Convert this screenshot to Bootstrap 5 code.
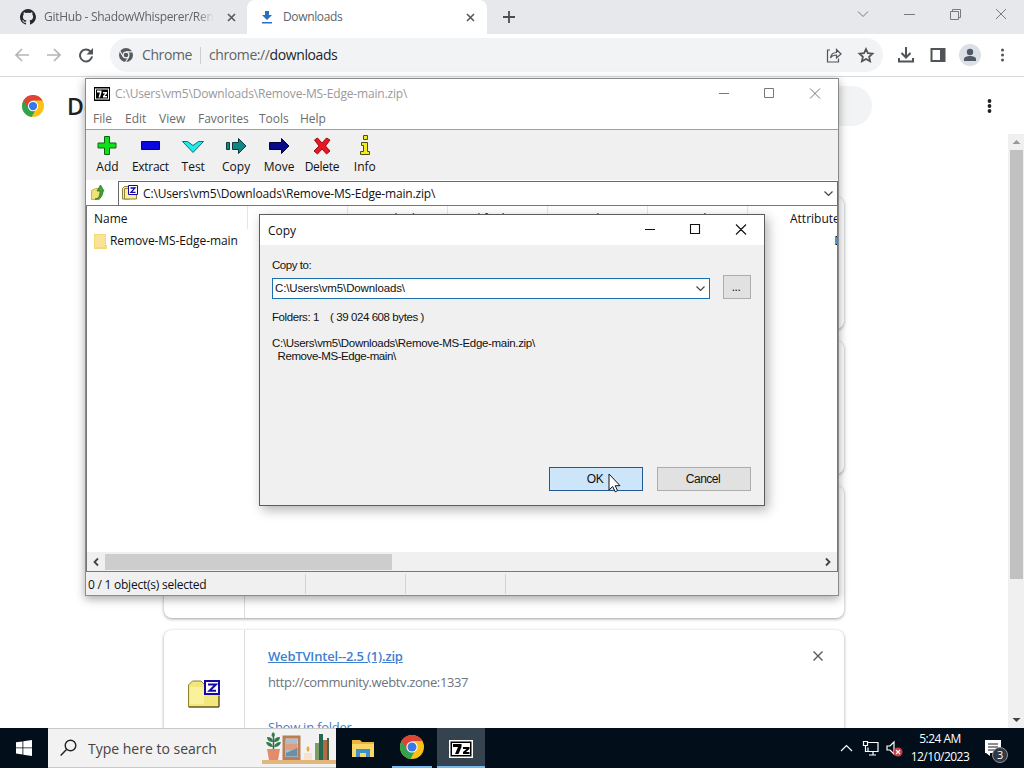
<!DOCTYPE html>
<html lang="en">
<head>
<meta charset="utf-8">
<title>Downloads</title>
<link href="https://cdn.jsdelivr.net/npm/bootstrap@5.3.0/dist/css/bootstrap.min.css" rel="stylesheet">
<style>
body{width:1024px;height:768px;overflow:hidden;font-family:"Open Sans","Noto Sans",sans-serif;font-size:12px;line-height:16px;color:#111;background:#fff}
svg{display:block;flex:none}
.txt{white-space:pre;flex:none}
.browser{height:728px}
.tabstrip{height:34px;flex:none;background:#e7e8eb;color:#5f6368}
.tab-idle{width:247px;padding-left:20px;border-bottom-right-radius:8px}
.tab-live{width:240px;background:#fff;border-radius:8px 8px 0 0;padding-left:14px}
.tab-title{font-size:12px;letter-spacing:-.35px}
.fade-end{width:170px;letter-spacing:-.3px;overflow:hidden;-webkit-mask-image:linear-gradient(90deg,#000 90%,transparent 100%);mask-image:linear-gradient(90deg,#000 90%,transparent 100%)}
.toolbar-row{height:43px;flex:none;border-bottom:1px solid #d9dadc;padding-left:14px}
.omnibox{width:773px;height:34px;border-radius:17px;background:#f1f3f4;font-size:14px;color:#5f6368;padding-left:9px;letter-spacing:-.4px}
.omnibox .vr{height:17px;align-self:center}
.pagehead{height:57px;flex:none}
.page-title{font-size:23px;line-height:28px;font-weight:600;color:#202124;width:98px}
.searchpill{width:680px;height:40px;border-radius:20px;background:#f1f3f4}
.pagebody{min-height:0}
.scroller{width:16px;background:#f0f0f0}
.thumb{width:13px;height:429px;background:#c1c1c1}
.dl-list{width:680px;margin-left:164px;margin-top:63px;gap:12px}
.dl-card{height:132.3px;border-radius:8px;background:#fff;box-shadow:0 1px 3px rgba(60,64,67,.4),0 1px 4px rgba(60,64,67,.12)}
.dl-icon{width:81px;border-right:1px solid #dcdcdc}
.dl-body{padding:18px 0 0 23px;font-size:13px}
.dl-link{font-weight:600;color:#3f7fd0;letter-spacing:-.19px}
.zipwin{left:85px;top:78px;width:754px;height:518px;border:1px solid #8b8b8b;background:#fff;box-shadow:0 3px 9px rgba(0,0,0,.35)}
.zip-title{height:30px;flex:none;color:#999;padding-left:8px}
.zip-menu{height:20px;flex:none;color:#6b6b6b;padding-left:7px}
.zip-tools{height:51px;flex:none;background:#f0f0f0;border-top:1px solid #a0a0a0}
.tool{width:42.9px;padding-top:5px}
.tool svg{margin-bottom:2px}
.path{letter-spacing:-.16px}
.addr{height:25px;flex:none}
.addr-box{border:1px solid #6a6a6a;border-bottom:0;margin-top:1px}
.filelist{border:1px solid #777;flex:1 1 0;min-height:0;overflow:hidden}
.col-row{height:23px;flex:none;display:grid;grid-template-columns:161px 100px 100px 100px 100px 100px 100px;align-items:center;overflow:hidden}
.col-row>div{border-right:1px solid #e5e5e5;height:23px;line-height:25px;padding:0 7px;white-space:nowrap}
.hscroll{height:19px;background:#f0f0f0}
.hthumb{width:287px;height:16px;background:#cdcdcd}
.statusbar{background:#f0f0f0;height:23px}
.statusbar>div{border-right:1px solid #d4d4d4;height:20px;line-height:22px}
.copydlg{left:259px;top:214px;width:506px;height:292px;border:1px solid #5c5c5c;background:#f0f0f0;box-shadow:3px 4px 11px rgba(0,0,0,.3);font-family:"Liberation Sans",Arial,sans-serif;font-size:11.5px;line-height:13px}
.dlg-title{height:30px;background:#fff;padding-left:8px;font-family:"Open Sans","Noto Sans",sans-serif;font-size:12px}
.combo{width:438px;height:21px;border:1px solid #1a6fb0;background:#fff;letter-spacing:-.13px}
.btn-win{border:1px solid #adadad;background:#e1e1e1;border-radius:0;font-size:12px;line-height:13px;padding:0 2px 0 0;color:#111;height:24px;width:94px;letter-spacing:-.5px}
.btn-win.go{border:1px solid #225a96;background:#cce5f9}
.pointer{left:608px;top:473px}
.taskbar{height:40px;background:#020e19;color:#fff}
.tb-search{width:288px;background:#f2f2f2;border:1px solid #c9c9c9;border-width:1px 0;color:#444;font-size:14px}
.tb-app{width:48px;height:40px}
.run{border-bottom:2px solid #76b9ed}
.active-app{background:#35434f}
.clock{width:66px;padding-top:2px;line-height:18px;letter-spacing:-.5px}
</style>
</head>
<body>
<svg width="0" height="0" class="position-absolute"><defs>
<symbol id="chrome" viewBox="0 0 24 24"><circle cx="12" cy="12" r="12" fill="#fbc116"/><path d="M12 12 1.6 6A12 12 0 0 0 10.5 23.9L16 14z" fill="#31a350"/><path d="M1.6 6A12 12 0 0 1 22.4 6H12L7 14.500z" fill="#dc4437"/><circle cx="12" cy="12" r="5.6" fill="#fff"/><circle cx="12" cy="12" r="4.5" fill="#3b78e7"/></symbol>
<symbol id="seven" viewBox="0 0 24 18"><path d="M0 0h24v18H0z" fill="#fff"/><path d="M1.500 1.500h21v15h-21z" fill="#000"/><path d="M3 3h18v12H3z" fill="#fff"/><path d="M4 4h8.500v3L9.500 14H6l3-7H4zM14 7h6.500v2L17 12h3.500v2H14v-2l3.500-3H14z" fill="#000"/></symbol>
<symbol id="sevensm" viewBox="0 0 16 14"><path d="M0 0h16v14H0z" fill="#000"/><path d="M1 1.500h14v11H1z" fill="#fff"/><path d="M2 2.500h12v9H2z" fill="#000"/><path d="M3 3.500h4.500v2L6 10.500H4.500L6 5.500H3zM9 5h4v1.500l-2.300 2.500H13v1.500H9V9l2.300-2.500H9z" fill="#fff"/></symbol>
<symbol id="zfold" viewBox="0 0 32 28"><path d="M.5 5l4-4H13l4 4h14v22H.500z" fill="#f3e67c" stroke="#8d8330"/><path d="M2 7h14v17H2z" fill="#fbf6a8" opacity=".7"/><path d="M1 27h30V16" fill="none" stroke="#4d4718"/><path d="M17 1h14v13H17z" fill="#fff" stroke="#1508a8" stroke-width="2"/><path d="M20 4.500h8l-6.500 6.300H28" fill="none" stroke="#1508a8" stroke-width="2"/></symbol>
</defs></svg>

<div class="browser d-flex flex-column">
  <div class="tabstrip d-flex align-items-stretch">
    <div class="tab-idle d-flex align-items-center">
      <svg width="16" height="16" viewBox="0 0 16 16"><path fill="#24292f" d="M8 0a8 8 0 0 0-2.530 15.590c.4.070.550-.170.550-.380v-1.490C4 14.090 3.480 13.200 3.320 12.750c-.090-.230-.480-.940-.820-1.130-.280-.150-.680-.520-.010-.530.630-.010 1.080.580 1.230.820.720 1.210 1.870.870 2.330.660.070-.520.280-.870.510-1.070-1.780-.200-3.640-.890-3.640-3.950 0-.870.310-1.590.820-2.150-.080-.200-.360-1.020.080-2.120 0 0 .670-.210 2.200.820a7.400 7.400 0 0 1 4 0c1.530-1.040 2.200-.820 2.200-.820.440 1.100.160 1.920.080 2.120.510.560.820 1.270.820 2.150 0 3.070-1.870 3.750-3.650 3.950.290.250.540.730.540 1.480v2.200c0 .210.150.460.550.380A8 8 0 0 0 8 0"/></svg>
      <div class="txt tab-title fade-end ms-2">GitHub - ShadowWhisperer/Ren</div>
      <svg style="margin-left:13px" width="9" height="9" viewBox="0 0 9 9"><path d="M1 1l7 7M8 1L1 8" stroke="#55585c" stroke-width="1.600"/></svg>
    </div>
    <div class="tab-live d-flex align-items-center">
      <svg width="12" height="13" viewBox="0 0 12 13"><path fill="#2a6fc4" d="M4 0h4v4h3L6 9 1 4h3zM1 11h10v1.500H1z"/></svg>
      <div class="txt tab-title" style="margin-left:10px">Downloads</div>
      <svg class="ms-auto" style="margin-right:12px" width="9" height="9" viewBox="0 0 9 9"><path d="M1 1l7 7M8 1L1 8" stroke="#55585c" stroke-width="1.600"/></svg>
    </div>
    <svg class="align-self-center" width="44" height="14" viewBox="0 0 44 14"><path d="M16 7h12M22 1v12" stroke="#4a4d51" stroke-width="1.800"/></svg>
    <svg class="ms-auto" width="170" height="30" viewBox="0 0 170 30" fill="none" stroke="#777a7e"><path d="M4 11.500l5 5 5-5M50 14.500h11M96.500 11.500h8v8h-8zM98.500 11.500v-2h8v8h-2M142 9l10 10M152 9l-10 10"/></svg>
  </div>

  <div class="toolbar-row d-flex align-items-center">
    <svg width="80" height="16" viewBox="0 0 80 16" fill="none" stroke-width="1.700"><path stroke="#b3b5b8" d="M15 8H2M8 2L2 8l6 6M33 8h13M40 2l6 6-6 6"/><path stroke="#515458" stroke-width="2" d="M76.500 4.500A6 6 0 1 0 78 9.300"/><path fill="#515458" d="M79 1v6.500h-6.500z"/></svg>
    <div class="omnibox d-flex align-items-center ms-3">
      <svg width="14" height="14" viewBox="0 0 24 24"><circle cx="12" cy="12" r="12" fill="#56595d"/><circle cx="12" cy="12" r="5" fill="none" stroke="#f1f3f4" stroke-width="2"/><path d="M12 6.500h11M7.300 15L1.800 5.500M16.800 15l-5.500 9" stroke="#f1f3f4" stroke-width="2"/></svg>
      <span class="txt" style="margin-left:9px">Chrome</span>
      <span class="vr mx-2"></span>
      <span class="txt">chrome://<span class="text-dark">downloads</span></span>
      <svg class="ms-auto" style="margin-right:-3px" width="60" height="18" viewBox="0 0 60 18" fill="none" stroke="#505357" stroke-width="1.200"><path d="M4 4H1.500v12h11v-3.500M4.500 12c.5-4 2.500-5.500 6-5.500V3.500l4.500 4.500-4.500 4V9c-3 0-4.500.5-6 3z"/><path stroke-width="1.700" d="M40 3l1.900 4.200 4.600.5-3.400 3.100 1 4.500-4.100-2.300-4.100 2.300 1-4.500-3.400-3.100 4.600-.5z"/></svg>
    </div>
    <svg class="ms-auto" width="134" height="24" viewBox="0 0 134 24"><path d="M16 4v10M11.500 10l4.500 4.500 4.500-4.500M9 15v3.500h14V15" fill="none" stroke="#505357" stroke-width="2"/><path d="M41.500 6h13v12h-13z" fill="#fff" stroke="#505357" stroke-width="2"/><path d="M50 6h5v12h-5z" fill="#505357"/><circle cx="80" cy="12" r="11" fill="#dcdfe6"/><circle cx="80" cy="9" r="3.200" fill="#505866"/><path d="M74 18v-2c0-4 12-4 12 0v2z" fill="#505866"/><circle cx="112.500" cy="7" r="1.500" fill="#505357"/><circle cx="112.500" cy="12" r="1.500" fill="#505357"/><circle cx="112.500" cy="17" r="1.500" fill="#505357"/></svg>
  </div>

  <div class="pagehead d-flex align-items-center">
    <svg style="margin-left:22px" width="22" height="22"><use href="#chrome"/></svg>
    <div class="page-title txt" style="margin-left:23px">De</div>
    <div class="searchpill" style="margin-left:27px"></div>
    <svg class="ms-auto" style="margin-right:32px" width="5" height="14" viewBox="0 0 5 14" fill="#202124"><circle cx="2.500" cy="2" r="1.900"/><circle cx="2.500" cy="7" r="1.900"/><circle cx="2.500" cy="12" r="1.900"/></svg>
  </div>
  <div class="pagebody d-flex flex-grow-1 overflow-hidden">
    <div class="dl-list d-flex flex-column">
      <div class="dl-card d-flex flex-shrink-0"><div class="dl-icon"></div></div>
      <div class="dl-card d-flex flex-shrink-0"><div class="dl-icon"></div></div>
      <div class="dl-card d-flex flex-shrink-0"><div class="dl-icon"></div></div>
      <div class="dl-card d-flex flex-shrink-0">
        <div class="dl-icon d-flex justify-content-center align-items-center"><svg style="margin-bottom:4px" width="32" height="28"><use href="#zfold"/></svg></div>
        <div class="dl-body flex-grow-1">
          <div class="d-flex justify-content-between align-items-center"><a href="#" class="dl-link txt">WebTVIntel--2.5 (1).zip</a><svg style="margin-right:21px" width="10" height="10" viewBox="0 0 10 10"><path d="M.5.500l9 9M9.500.500l-9 9" stroke="#55585c" stroke-width="1.400"/></svg></div>
          <div class="txt text-secondary" style="margin-top:10px;letter-spacing:-.38px">http://community.webtv.zone:1337</div>
          <div class="txt" style="margin-top:29px;color:#3f7fd0;letter-spacing:-.25px">Show in folder</div>
        </div>
      </div>
    </div>
    <div class="scroller ms-auto d-flex flex-column align-items-center">
      <svg class="my-1" width="9" height="8" viewBox="0 0 9 8"><path d="M.5 6L4.500 2l4 4z" fill="#999"/></svg>
      <div class="thumb"></div>
      <svg class="mt-auto mb-1" width="9" height="8" viewBox="0 0 9 8"><path d="M.5 2h8l-4 4z" fill="#444"/></svg>
    </div>
  </div>
</div>

<div class="taskbar d-flex">
  <div class="tb-app d-flex align-items-center justify-content-center"><svg width="16" height="16" viewBox="0 0 16 16" fill="#fff"><path d="M0 2.300l6.500-.9v6.100H0zM7.300 1.300L16 0v7.500H7.300zM0 8.300h6.500v6.200L0 13.600zM7.300 8.300H16V16l-8.700-1.300z"/></svg></div>
  <div class="tb-search d-flex align-items-center">
    <svg style="margin-left:12px" width="17" height="18" viewBox="0 0 17 18" fill="none" stroke="#222" stroke-width="1.400"><circle cx="10.500" cy="6.500" r="5.300"/><path d="M6.500 10.500L.7 16.500"/></svg>
    <span class="txt" style="margin:2px 0 0 11px">Type here to search</span>
    <svg class="ms-auto" width="74" height="38" viewBox="0 0 74 38"><path d="M0 31h74v4H0z" fill="#e2b67d"/><path d="M5 20h13l-2 11H7z" fill="#e48b6c"/><path d="M11.500 20V7" stroke="#2f6b45" stroke-width="1.500"/><path d="M11 8q-3-1 0-5 4 3 0 5M11 13q-6 0-6-5 6 0 6 5M12 13q6 0 6-5-6 0-6 5M11 18q-6 0-7-5 6 0 7 5M12 18q6 0 7-5-6 0-7 5" fill="#34794d"/><path d="M20.500 6.500h18v24.500h-18z" fill="#b77e5c"/><path d="M23.500 9.500h12.500v18.500H23.500z" fill="#f0d5bd"/><path d="M24 10h11.500v17.500H24z" fill="#a9bfcd"/><path d="M24 15h11.500v6H24z" fill="#e09c7c"/><path d="M24 24l11.500-5v8.500H24z" fill="#6b8fa8"/><path d="M42 24h8v7h-8z" fill="#f5e3cb"/><path d="M46 23q-3-3 0-6 3 3 0 6" fill="#eda53c"/><path d="M53 14h4v17h-4z" fill="#7d9e68"/><path d="M57 5h4v26h-4z" fill="#276850"/><path d="M61 11h4v20h-4z" fill="#b16a42"/><path d="M65 9h2v22h-2z" fill="#49634b"/></svg>
  </div>
  <div class="tb-app d-flex align-items-center justify-content-center" style="margin-left:3px"><svg width="22" height="19" viewBox="0 0 22 19"><path d="M0 1h8l2 2h12v15H0z" fill="#e8b63f"/><path d="M0 5h22v13H0z" fill="#fbd768"/><path d="M4 18V10h14v8h-4v-4H8v4z" fill="#3c91c9"/></svg></div>
  <div class="tb-app run d-flex align-items-center justify-content-center" style="margin:0 5px;width:40px"><svg width="24" height="24"><use href="#chrome"/></svg></div>
  <div class="tb-app run active-app d-flex align-items-center justify-content-center"><svg style="margin-top:3px" width="24" height="18"><use href="#seven"/></svg></div>
  <svg class="ms-auto" width="66" height="40" viewBox="0 0 66 40" fill="none" stroke="#fff" stroke-width="1.200"><path d="M1 23l5.500-5.500L12 23"/><path d="M27.500 14.500H38v9H28v-4M33 23.500V27M29 27h7M23.500 13.500h4v4h-4zM25.500 17.500v6h2"/><path d="M47 18h3l4-4v12l-4-4h-3z"/><circle cx="58" cy="24" r="4.500" fill="#cf3b3f" stroke="none"/><path d="M56 22l4 4M60 22l-4 4"/></svg>
  <div class="clock text-center" style="margin-left:1px"><div class="txt">5:24 AM</div><div class="txt">12/10/2023</div></div>
  <svg style="margin:0 16px 0 9px" width="26" height="40" viewBox="0 0 26 40"><path d="M3 12h16v13H8v3l-4-3H3z" fill="#fff"/><path d="M6 16h10M6 19h10M6 22h7" stroke="#111c28"/><circle cx="18" cy="27" r="7.500" fill="#303943" stroke="#8d959b"/><text x="15" y="31" font-size="11" fill="#fff">3</text></svg>
</div>

<section class="zipwin position-absolute d-flex flex-column">
  <div class="zip-title d-flex align-items-center">
    <svg width="16" height="14"><use href="#sevensm"/></svg>
    <span class="txt path" style="margin-left:5px">C:\Users\vm5\Downloads\Remove-MS-Edge-main.zip\</span>
    <svg class="ms-auto me-3" width="104" height="12" viewBox="0 0 104 12" fill="none" stroke="#777"><path d="M1 5.500h10M46.500.500h9v9h-9zM92 .5l10 10M102 .5l-10 10"/></svg>
  </div>
  <div class="zip-menu d-flex align-items-center"><span class="txt" style="width:32px">File</span><span class="txt" style="width:34px">Edit</span><span class="txt" style="width:39px">View</span><span class="txt" style="width:61px">Favorites</span><span class="txt" style="width:41px">Tools</span><span class="txt">Help</span></div>
  <div class="zip-tools d-flex">
    <div class="tool d-flex flex-column align-items-center"><svg width="22" height="22" viewBox="0 0 22 22"><path d="M8.500 1.500h5v6.500h6.500v5h-6.500v6.500h-5v-6.500H2v-5h6.500z" fill="#0be21a" stroke="#126213"/></svg><span class="txt">Add</span></div>
    <div class="tool d-flex flex-column align-items-center"><svg width="22" height="22" viewBox="0 0 22 22"><path d="M2.500 6.500h18v8h-18z" fill="#0808df" stroke="#050568"/></svg><span class="txt" style="letter-spacing:-.3px">Extract</span></div>
    <div class="tool d-flex flex-column align-items-center"><svg width="24" height="22" viewBox="0 0 24 22"><path d="M1.500 6.500h5l5.500 4 5.500-4h5L12 17.500z" fill="#1eebe9" stroke="#176a70"/></svg><span class="txt">Test</span></div>
    <div class="tool d-flex flex-column align-items-center"><svg width="22" height="22" viewBox="0 0 22 22"><path d="M1.500 7.500h3v7h-3zM7.500 7.500h6v-4l7.500 7.500-7.500 7.500v-4h-6z" fill="#128584" stroke="#063c3c"/></svg><span class="txt">Copy</span></div>
    <div class="tool d-flex flex-column align-items-center"><svg width="22" height="22" viewBox="0 0 22 22"><path d="M1.500 7.500h12v-4l7.500 7.500-7.500 7.500v-4h-12z" fill="#09098b" stroke="#020239"/></svg><span class="txt">Move</span></div>
    <div class="tool d-flex flex-column align-items-center"><svg width="22" height="22" viewBox="0 0 22 22"><path d="M3.500 5l3-2 4.500 5 4.500-5 3.500 2-4.500 6 4.500 5-3.500 3-4.500-5-4.500 5-3.500-3 5-5z" fill="#ea1722" stroke="#8d1115"/></svg><span class="txt" style="letter-spacing:-.3px">Delete</span></div>
    <div class="tool d-flex flex-column align-items-center"><svg width="22" height="22" viewBox="0 0 22 22"><path d="M9.500.500h4v4h-4zM7.500 7.500h6v9h2v3h-9v-3h3v-6h-2z" fill="#f3eb20" stroke="#504c0a"/></svg><span class="txt">Info</span></div>
  </div>
  <div class="addr d-flex">
    <svg style="margin:4px 11px 0 5px" width="16" height="17" viewBox="0 0 16 17"><path d="M.5 6.500l4-2h4l3 3-3 8H.500z" fill="#efe176" stroke="#c7b54d"/><path d="M4 15c4 0 5-4 5-8H6l3.500-6L13 7h-1c0 5-3 9-8 8z" fill="#43a436" stroke="#216d1e" stroke-width=".7"/></svg>
    <div class="addr-box flex-grow-1 d-flex align-items-center">
      <svg style="margin:0 0 3px 3px" width="16" height="15" viewBox="0 0 16 15"><path d="M.5 3.500l2-2h5v12.500H.500z" fill="#f8f0a0" stroke="#8d8330"/><path d="M2.500 3.500h12v10.500h-12z" fill="#f7ee99" stroke="#8d8330"/><path d="M6.500.500h9v9h-9z" fill="#fff" stroke="#1508a8"/><path d="M8.500 3h4.500L9 7.300h4.500" fill="none" stroke="#1508a8" stroke-width="1.300"/></svg>
      <span class="txt path" style="margin-left:5px">C:\Users\vm5\Downloads\Remove-MS-Edge-main.zip\</span>
      <svg class="ms-auto me-1" width="9" height="6" viewBox="0 0 9 6"><path d="M.5.500l4 4 4-4" fill="none" stroke="#444" stroke-width="1.200"/></svg>
    </div>
  </div>
  <div class="filelist d-flex flex-column">
    <div class="col-row"><div>Name</div><div class="text-end">Size</div><div class="text-end">Packed Size</div><div>Modified</div><div>Created</div><div>Accessed</div><div style="padding:0 0 0 42px;border:0">Attributes</div></div>
    <div class="d-flex align-items-center mt-1" style="padding-left:7px;margin-right:-6px"><svg width="13" height="16" viewBox="0 0 13 16"><path d="M0 1h12v11h1v4H0z" fill="#f4d976"/><path d="M1 2h10v12H1z" fill="#fae394"/></svg><span class="txt" style="margin-left:3px;letter-spacing:-.1px">Remove-MS-Edge-main</span><span class="txt ms-auto">D</span></div>
    <div class="hscroll d-flex align-items-center mt-auto"><svg width="18" height="16" viewBox="0 0 18 16"><path d="M11 4.500L7.500 8l3.500 3.500" fill="none" stroke="#444" stroke-width="1.800"/></svg><div class="hthumb"></div><svg class="ms-auto" width="18" height="16" viewBox="0 0 18 16"><path d="M7 4.500L10.500 8 7 11.500" fill="none" stroke="#444" stroke-width="1.800"/></svg></div>
  </div>
  <div class="statusbar d-flex align-items-center flex-shrink-0"><div class="txt" style="width:220px;padding-left:2px;letter-spacing:-.24px">0 / 1 object(s) selected</div><div style="width:100px"></div><div style="width:100px"></div></div>
</section>

<section class="copydlg position-absolute">
  <div class="dlg-title d-flex align-items-center"><span>Copy</span>
    <svg class="ms-auto" style="margin-right:17px" width="104" height="12" viewBox="0 0 104 12" fill="none" stroke="#111" stroke-width="1.100"><path d="M2 5.500h10M47.500.500h9v9h-9zM93 .5l10 10M103 .5l-10 10"/></svg></div>
  <div style="padding:14px 0 0 12px">
    <div class="txt" style="letter-spacing:-.45px">Copy to:</div>
    <div class="d-flex align-items-end" style="margin-top:3px;gap:13px">
      <div class="combo d-flex align-items-center justify-content-between"><span class="txt" style="margin-left:2px">C:\Users\vm5\Downloads\</span><svg class="me-1" width="9" height="6" viewBox="0 0 9 6"><path d="M.5.500l4 4 4-4" fill="none" stroke="#444" stroke-width="1.200"/></svg></div>
      <button class="btn btn-win" style="width:28px">...</button>
    </div>
    <div class="txt" style="margin-top:12px;letter-spacing:-.42px">Folders: 1    ( 39 024 608 bytes )</div>
    <div class="txt" style="margin-top:13px;letter-spacing:-.31px">C:\Users\vm5\Downloads\Remove-MS-Edge-main.zip\</div>
    <div class="txt" style="letter-spacing:-.42px">  Remove-MS-Edge-main\</div>
  </div>
  <div class="d-flex justify-content-end" style="gap:14px;margin:104px 13px 0 0"><button class="btn btn-win go">OK</button><button class="btn btn-win">Cancel</button></div>
</section>

<svg class="pointer position-absolute" width="13" height="20" viewBox="0 0 13 20"><path d="M1 1v16l3.700-3.500 2.500 5.300 2.400-1.100-2.400-5H12z" fill="#fff" stroke="#111"/></svg>
<script src="https://cdn.jsdelivr.net/npm/bootstrap@5.3.0/dist/js/bootstrap.bundle.min.js"></script>
</body>
</html>
